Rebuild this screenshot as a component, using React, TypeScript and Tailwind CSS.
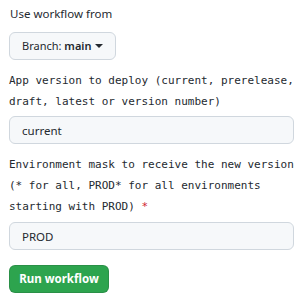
const SANS = "font-['Noto_Sans','Open_Sans',sans-serif]";
const MONO = "font-['DejaVu_Sans_Mono','Liberation_Mono',monospace]";

function Field({ value }: { value: string }) {
  return (
    <input
      className={`block w-full h-[28px] px-[12px] bg-[#f6f8fa] border border-[#d0d7de] rounded-[6px] text-[11.5px] text-[#24292f] outline-none ${SANS}`}
      defaultValue={value}
      type="text"
    />
  );
}

export default function App() {
  return (
    <div className={`w-[303px] h-[299px] bg-white pt-[4px] px-[9px] text-[#24292f] ${SANS}`}>
      <p className="h-[20px] leading-[20px] text-[11.5px] pl-[1px]">Use workflow from</p>

      <button className="mt-[8px] h-[28px] w-[107px] pl-[12px] flex items-center gap-[4px] bg-[#f6f8fa] border border-[#d0d7de] rounded-[6px] text-[11px]">
        <span>
          Branch: <span className="font-semibold">main</span>
        </span>
        <span className="w-0 h-0 border-x-[4px] border-x-transparent border-t-[4px] border-t-[#24292f]" />
      </button>

      <p className={`mt-[10px] leading-[21px] text-[11px] ${MONO}`}>
        App version to deploy (current, prerelease, draft, latest or version number)
      </p>
      <div className="mt-[4px]">
        <Field value="current" />
      </div>

      <p className={`mt-[10px] leading-[21px] text-[11px] ${MONO}`}>
        Environment mask to receive the new version (* for all, PROD* for all environments starting with PROD){" "}
        <span className="text-[#cf222e]">*</span>
      </p>
      <div className="mt-[5px]">
        <Field value="PROD" />
      </div>

      <button className="mt-[15px] h-[28px] w-[100px] flex items-center justify-center bg-[#2da44e] border border-[#1b1f2426] rounded-[6px] text-white text-[11.5px] font-bold">
        Run workflow
      </button>
    </div>
  );
}
